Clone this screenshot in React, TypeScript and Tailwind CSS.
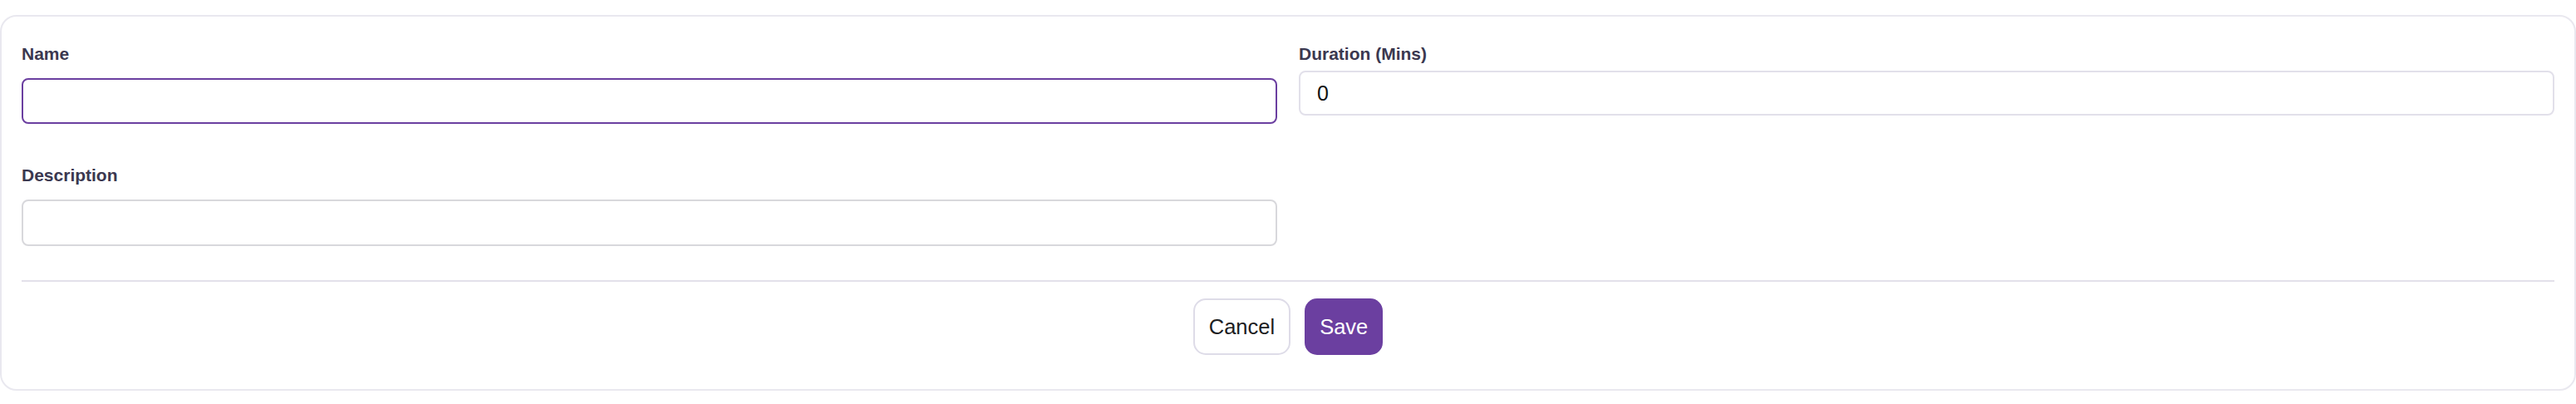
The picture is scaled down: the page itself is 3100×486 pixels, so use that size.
import React from "react";

export default function App() {
  const font = { fontFamily: '"Liberation Sans", Arial, sans-serif' };
  return (
    <div className="w-[3100px] h-[486px] bg-white pt-[18px]" style={font}>
      <div className="rounded-[20px] border-2 border-[#e9e8ef] bg-white px-6 pt-[31px] pb-[41px]">
        <div className="grid grid-cols-2 gap-x-[26px]">
          <div className="flex flex-col">
            <label className="text-[21px] leading-[28px] font-bold text-[#3b3850]">Name</label>
            <input
              readOnly
              value=""
              className="mt-[15px] h-[55px] w-full rounded-[8px] border-2 border-[#6b3fa0] bg-white px-[20px] text-[25px] text-black outline-none"
            />
            <label className="mt-[48px] text-[21px] leading-[28px] font-bold text-[#3b3850]">Description</label>
            <input
              readOnly
              value=""
              className="mt-[15px] h-[56px] w-full rounded-[8px] border-2 border-[#d8d8dc] bg-white px-[20px] text-[25px] text-black outline-none"
            />
          </div>
          <div className="flex flex-col">
            <label className="text-[21px] leading-[28px] font-bold text-[#3b3850]">Duration (Mins)</label>
            <input
              readOnly
              value="0"
              className="mt-[6px] h-[54px] w-full rounded-[8px] border-2 border-[#e2e0ea] bg-white px-[20px] text-[25px] text-[#111] outline-none"
            />
          </div>
        </div>
        <div className="mt-[41px] h-[2px] bg-[#e3e1ea]" />
        <div className="mt-[20px] flex justify-center gap-[17px]">
          <button className="h-[68px] rounded-[15px] border-2 border-[#dedce8] bg-white px-[17px] text-[25.5px] text-[#1d1d22]">
            Cancel
          </button>
          <button className="h-[68px] rounded-[15px] bg-[#6b3fa0] px-[18px] text-[25.5px] text-white">
            Save
          </button>
        </div>
      </div>
    </div>
  );
}
